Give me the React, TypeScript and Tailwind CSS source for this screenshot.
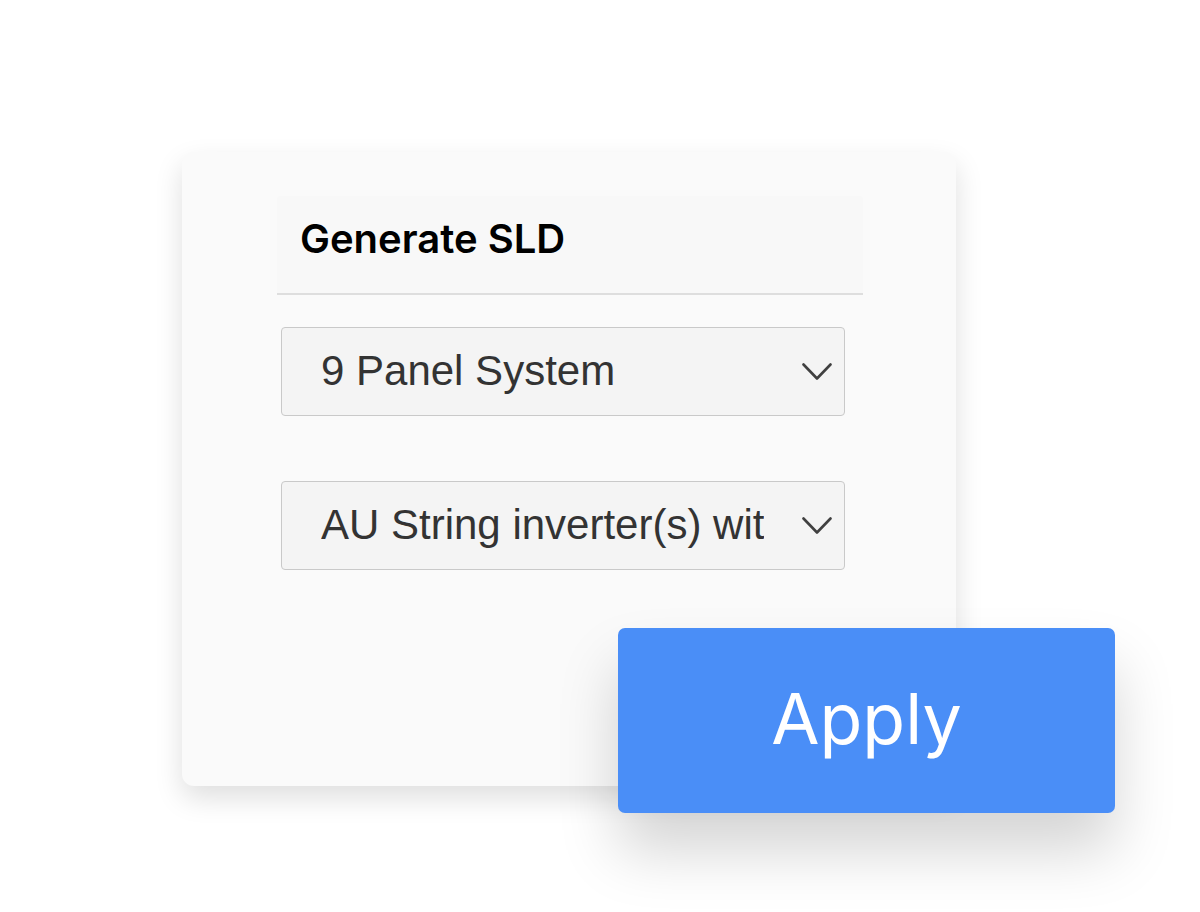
import React from 'react';

const options = ['9 Panel System', 'AU String inverter(s) with optimisers'];

function Chevron() {
  return (
    <svg width="30" height="18" viewBox="0 0 30 18" fill="none" className="shrink-0">
      <path d="M1.5 1.5 L15 15.5 L28.5 1.5" stroke="#404040" strokeWidth="2.6" strokeLinecap="round" strokeLinejoin="round" />
    </svg>
  );
}

function FakeSelect({ value }: { value: string }) {
  return (
    <div className="ml-1 w-[564px] h-[89px] flex items-center gap-[38px] pl-[39px] pr-[12px] bg-[#f4f4f4] border border-[#c9c9c9] rounded-[4px]">
      <span
        className="flex-1 min-w-0 overflow-hidden whitespace-nowrap text-[42px] text-[#333333] leading-[1.2]"
        style={{ fontFamily: '"Liberation Sans", Arial, sans-serif' }}
      >
        {value}
      </span>
      <Chevron />
    </div>
  );
}

export default function App() {
  return (
    <div className="w-[1200px] h-[912px] bg-white overflow-hidden pl-[182px] pt-[152px]" style={{ fontFamily: 'Inter, "Noto Sans", sans-serif' }}>
      <div className="relative w-[774px] h-[634px] rounded-[12px] bg-[#fafafa] shadow-[0_12px_28px_rgba(0,0,0,0.13)] pt-[44px] pl-[95px]">
        <div className="w-[586px] h-[99px] flex items-center pl-[23px] pb-[12px] bg-[#f8f8f8] border-b-2 border-[#dedede] rounded-t-[2px]">
          <h1 className="text-[40px] font-semibold text-black leading-none">Generate SLD</h1>
        </div>
        <div className="flex flex-col gap-[65px] pt-[32px]">
          {options.map((o) => (
            <FakeSelect key={o} value={o} />
          ))}
        </div>

        <button className="absolute left-[436px] top-[476px] w-[497px] h-[185px] rounded-[7px] bg-[#4a8ef7] text-white text-[70px] font-normal shadow-[0_38px_60px_rgba(0,0,0,0.17)] flex items-center justify-center pb-[4px]">
          Apply
        </button>
      </div>
    </div>
  );
}
